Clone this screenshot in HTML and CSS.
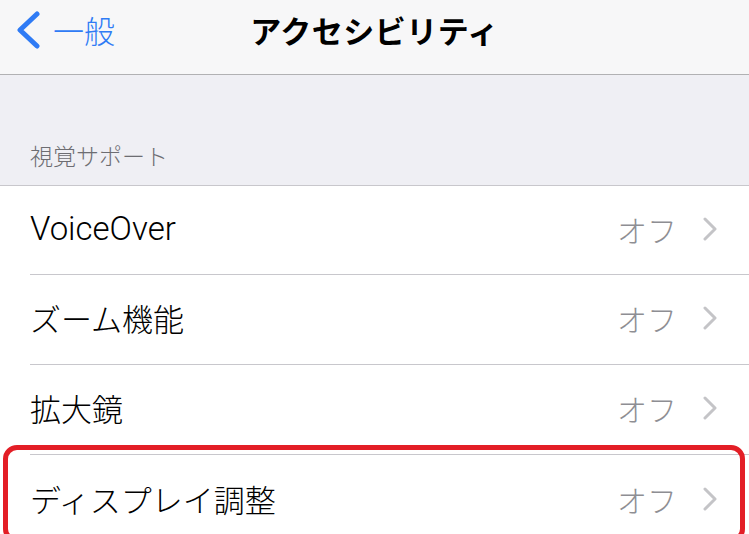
FILE: index.html
```html
<!DOCTYPE html>
<html lang="ja">
<head>
  <meta charset="UTF-8" />
  <meta name="viewport" content="width=device-width, initial-scale=1.0" />
  <title>アクセシビリティ</title>
  <link rel="stylesheet" href="styles.css">
</head>
<body>

  <header class="navbar">
    <a class="back" href="#">
      <svg class="back-icon" viewBox="0 0 26 38" width="26" height="38">
        <path d="M22 3 L5 19 L22 35" fill="none" stroke="currentColor" stroke-width="5" stroke-linecap="round" stroke-linejoin="round" />
      </svg>
      <span>一般</span>
    </a>
    <h1 class="title">アクセシビリティ</h1>
  </header>

  <div class="section-header">視覚サポート</div>

  <ul class="list">
    <li class="row">
      <div class="row-body">
        <span class="label latin">VoiceOver</span>
        <span class="value">オフ</span>
        <svg class="chevron" viewBox="0 0 16 24" width="16" height="24">
          <path d="M3 2 L13 12 L3 22" fill="none" stroke="currentColor" stroke-width="3" stroke-linecap="round" stroke-linejoin="round" />
        </svg>
      </div>
    </li>
    <li class="row">
      <div class="row-body">
        <span class="label">ズーム機能</span>
        <span class="value">オフ</span>
        <svg class="chevron" viewBox="0 0 16 24" width="16" height="24">
          <path d="M3 2 L13 12 L3 22" fill="none" stroke="currentColor" stroke-width="3" stroke-linecap="round" stroke-linejoin="round" />
        </svg>
      </div>
    </li>
    <li class="row">
      <div class="row-body">
        <span class="label">拡大鏡</span>
        <span class="value">オフ</span>
        <svg class="chevron" viewBox="0 0 16 24" width="16" height="24">
          <path d="M3 2 L13 12 L3 22" fill="none" stroke="currentColor" stroke-width="3" stroke-linecap="round" stroke-linejoin="round" />
        </svg>
      </div>
    </li>
    <li class="row highlighted">
      <div class="row-body">
        <span class="label">ディスプレイ調整</span>
        <span class="value">オフ</span>
        <svg class="chevron" viewBox="0 0 16 24" width="16" height="24">
          <path d="M3 2 L13 12 L3 22" fill="none" stroke="currentColor" stroke-width="3" stroke-linecap="round" stroke-linejoin="round" />
        </svg>
      </div>
    </li>
  </ul>

</body>
</html>
```

FILE: styles.css
```css
:root {
  --blue: #2f7bf5;
  --separator: #c8c7cc;
  --inset: 30px;
}

body {
  margin: 0;
  background: #efeff4;
  font-family: 'Noto Sans CJK JP', sans-serif;
  color: #000;
  overflow: hidden;
}

.navbar {
  position: relative;
  height: 60px;
  padding-bottom: 14px;
  background: #f7f7f8;
  border-bottom: 1px solid #b1b1b3;
  display: flex;
  align-items: center;
  justify-content: center;
}

.back {
  position: absolute;
  left: 15px;
  top: 11px;
  display: flex;
  align-items: center;
  gap: 12px;
  color: var(--blue);
  text-decoration: none;
  font-size: 31px;
  font-weight: 300;
  line-height: 38px;
}

.back-icon {
  display: block;
}

.title {
  margin: 0;
  font-size: 31px;
  font-weight: 700;
  line-height: 60px;
  letter-spacing: 0.5px;
}

.section-header {
  height: 110px;
  box-sizing: border-box;
  padding: 0 var(--inset) 14px;
  display: flex;
  align-items: flex-end;
  font-size: 23px;
  font-weight: 300;
  line-height: 32px;
  color: #6d6d72;
}

.list {
  list-style: none;
  margin: 0;
  padding: 0;
  background: #fff;
  border-top: 1px solid var(--separator);
}

.row {
  position: relative;
  padding-left: var(--inset);
}

.row-body {
  height: 89px;
  box-sizing: border-box;
  display: flex;
  align-items: center;
  padding: 0 31px 3px 0;
  border-bottom: 1px solid var(--separator);
}

.row + .row .row-body {
  height: 90px;
}

.row:last-child .row-body {
  border-bottom: none;
}

.label {
  flex: 1;
  font-size: 31px;
  font-weight: 300;
  line-height: 40px;
}

.label.latin {
  font-family: Roboto, 'Noto Sans CJK JP', sans-serif;
  font-weight: 300;
  font-size: 33px;
}

.value {
  font-size: 30px;
  font-weight: 300;
  color: #8e8e93;
  margin-right: 25px;
}

.chevron {
  display: block;
  color: #c4c4c7;
}

/* red annotation frame */
.highlighted::before {
  content: '';
  position: absolute;
  left: 3px;
  right: 4px;
  top: -10px;
  height: 88px;
  border: 5px solid #e31e26;
  border-radius: 14px;
  pointer-events: none;
}
```
